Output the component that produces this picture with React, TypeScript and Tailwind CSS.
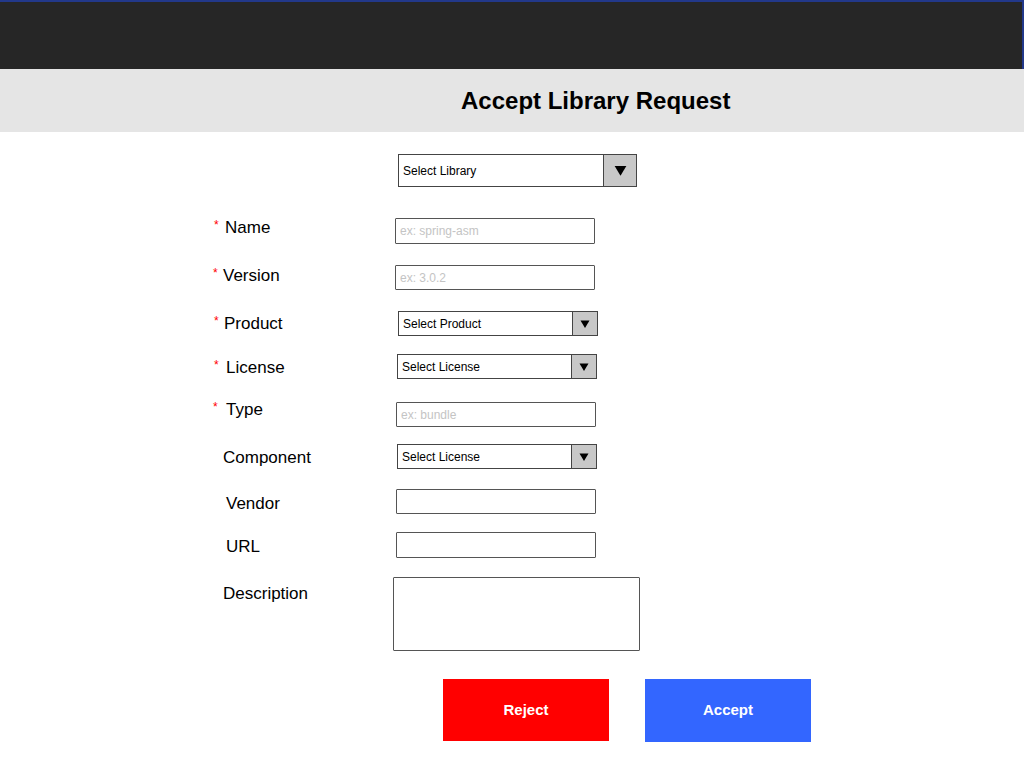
const font = { fontFamily: '"Liberation Sans", Arial, sans-serif' }

type Row = {
  label?: string
  star?: string
  text: string
  rowMt: string
  labelMt: string
  inputMt: string
  inputMl: string
  kind: 'input' | 'select' | 'area'
  value?: string
  height: string
}

const rows: Row[] = [
  { label: 'Name', star: 'ml-[1px]', text: 'ml-[6px]', rowMt: 'mt-[30px]', labelMt: 'mt-[1px]', inputMt: 'mt-[1px]', inputMl: 'ml-[2px]', kind: 'input', value: 'ex: spring-asm', height: 'h-[26px]' },
  { label: 'Version', star: 'ml-0', text: 'ml-[5px]', rowMt: 'mt-[21px]', labelMt: 'mt-[1px]', inputMt: 'mt-0', inputMl: 'ml-[2px]', kind: 'input', value: 'ex: 3.0.2', height: 'h-[25px]' },
  { label: 'Product', star: 'ml-[1px]', text: 'ml-[5px]', rowMt: 'mt-[21px]', labelMt: 'mt-[3px]', inputMt: 'mt-0', inputMl: 'ml-[5px]', kind: 'select', value: 'Select Product', height: 'h-[25px]' },
  { label: 'License', star: 'ml-[1px]', text: 'ml-[7px]', rowMt: 'mt-[18px]', labelMt: 'mt-[4px]', inputMt: 'mt-0', inputMl: 'ml-[4px]', kind: 'select', value: 'Select License', height: 'h-[25px]' },
  { label: 'Type', star: 'ml-0', text: 'ml-[8px]', rowMt: 'mt-[20px]', labelMt: 'mt-[1px]', inputMt: 'mt-[3px]', inputMl: 'ml-[3px]', kind: 'input', value: 'ex: bundle', height: 'h-[25px]' },
  { label: 'Component', text: 'ml-[10px]', rowMt: 'mt-[17px]', labelMt: 'mt-[4px]', inputMt: 'mt-0', inputMl: 'ml-[4px]', kind: 'select', value: 'Select License', height: 'h-[25px]' },
  { label: 'Vendor', text: 'ml-[13px]', rowMt: 'mt-[20px]', labelMt: 'mt-[5px]', inputMt: 'mt-0', inputMl: 'ml-[3px]', kind: 'input', height: 'h-[25px]' },
  { label: 'URL', text: 'ml-[13px]', rowMt: 'mt-[18px]', labelMt: 'mt-[5px]', inputMt: 'mt-0', inputMl: 'ml-[3px]', kind: 'input', height: 'h-[26px]' },
  { label: 'Description', text: 'ml-[10px]', rowMt: 'mt-[19px]', labelMt: 'mt-[7px]', inputMt: 'mt-0', inputMl: 'ml-0', kind: 'area', height: 'h-[74px]' },
]

function Caret({ size }: { size: number }) {
  return (
    <svg width={size} height={size} viewBox="0 0 10 10">
      <polygon points="0.5,1.5 9.5,1.5 5,9" fill="#000" />
    </svg>
  )
}

function Select({ value, height, big }: { value: string; height: string; big?: boolean }) {
  return (
    <div className={`flex ${height} ${big ? 'w-[239px]' : 'w-[200px]'} border border-[#444] bg-white`}>
      <div className="flex flex-1 items-center pl-[4px] text-[12px] text-black">{value}</div>
      <div className={`flex ${big ? 'w-[33px]' : 'w-[25px]'} items-center justify-center border-l border-[#444] bg-[#c8c8c8]`}>
        <Caret size={big ? 13 : 10} />
      </div>
    </div>
  )
}

function Field({ row }: { row: Row }) {
  if (row.kind === 'select') return <Select value={row.value ?? ''} height={row.height} />
  if (row.kind === 'area')
    return <div className={`${row.height} w-[247px] rounded-[1px] border border-[#555] bg-white`} />
  return (
    <div className={`flex ${row.height} w-[200px] items-center rounded-[1px] border border-[#555] bg-white pl-[4px] text-[12px] text-[#c4c4c4]`}>
      {row.value}
    </div>
  )
}

export default function App() {
  return (
    <div className="min-h-[768px] w-[1024px] bg-white" style={font}>
      <div className="h-[69px] border-r-2 border-t-2 border-[#22388a] bg-[#262626]" />
      <div className="flex h-[63px] items-center bg-[#e5e5e5] pl-[461px]">
        <h1 className="text-[24px] font-bold leading-[28px] text-black">Accept Library Request</h1>
      </div>

      <div className="pl-[213px]">
        <div className="mt-[22px] flex">
          <div className="w-[180px]" />
          <div className="ml-[5px]">
            <Select value="Select Library" height="h-[33px]" big />
          </div>
        </div>

        {rows.map((row) => (
          <div key={row.label} className={`flex items-start ${row.rowMt}`}>
            <div className={`flex w-[180px] items-start ${row.labelMt}`}>
              {row.star && (
                <span className={`inline-block w-[5px] text-[12px] leading-[14px] text-[#ff0000] ${row.star}`}>*</span>
              )}
              <span className={`text-[17px] leading-[20px] text-black ${row.text}`}>{row.label}</span>
            </div>
            <div className={`${row.inputMl} ${row.inputMt}`}>
              <Field row={row} />
            </div>
          </div>
        ))}
      </div>

      <div className="mt-[28px] flex gap-[36px] pl-[443px]">
        <button className="flex h-[62px] w-[166px] items-center justify-center bg-[#ff0000] text-[15px] font-bold text-white">
          Reject
        </button>
        <button className="flex h-[63px] w-[166px] items-center justify-center bg-[#3366ff] text-[15px] font-bold text-white">
          Accept
        </button>
      </div>
    </div>
  )
}
